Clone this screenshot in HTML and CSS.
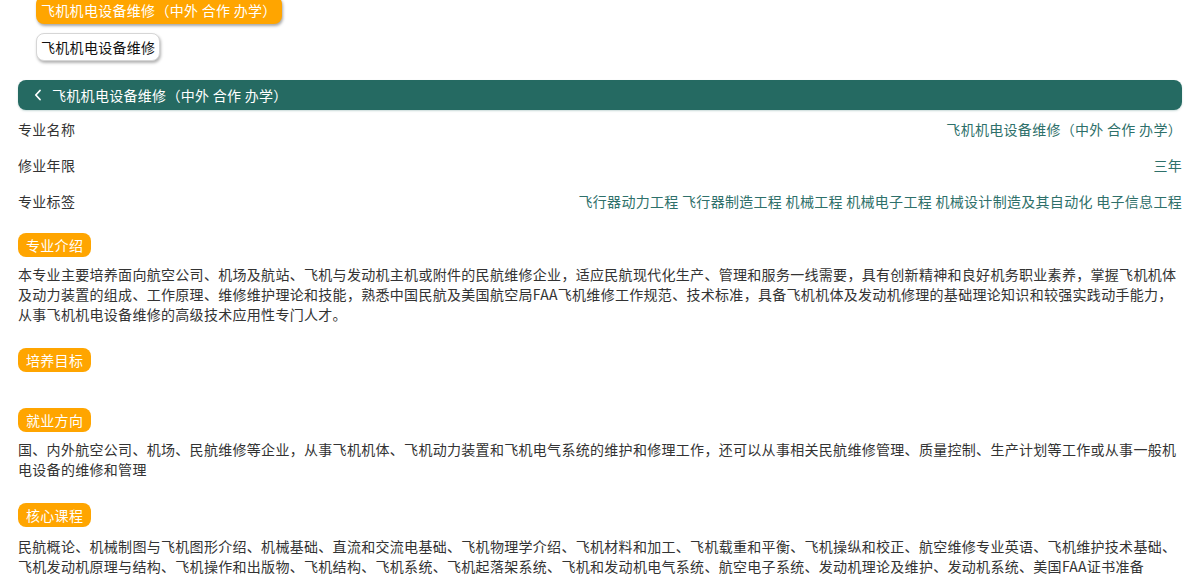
FILE: index.html
```html
<!DOCTYPE html>
<html lang="zh-CN">
<head>
<meta charset="utf-8">
<title>飞机机电设备维修（中外 合作 办学）</title>
<link rel="stylesheet" href="styles.css">
</head>
<body>
<div class="page">
  <div class="btn-group">
    <span class="btn btn-primary">飞机机电设备维修（中外 合作 办学）</span>
    <span class="btn btn-default">飞机机电设备维修</span>
  </div>

  <div class="title-bar">
    <svg class="back" width="8" height="12" viewBox="0 0 8 12"><polyline points="6,1.5 1.8,6 6,10.5" fill="none" stroke="#fff" stroke-width="1.8" stroke-linecap="round" stroke-linejoin="round"/></svg>
    <span class="title-text">飞机机电设备维修（中外 合作 办学）</span>
  </div>

  <div class="info">
    <div class="info-row"><span class="label">专业名称</span><span class="value">飞机机电设备维修（中外 合作 办学）</span></div>
    <div class="info-row"><span class="label">修业年限</span><span class="value">三年</span></div>
    <div class="info-row"><span class="label">专业标签</span><span class="value">飞行器动力工程 飞行器制造工程 机械工程 机械电子工程 机械设计制造及其自动化 电子信息工程</span></div>
  </div>

  <div class="section first">
    <span class="badge">专业介绍</span>
    <p class="content">本专业主要培养面向航空公司、机场及航站、飞机与发动机主机或附件的民航维修企业，适应民航现代化生产、管理和服务一线需要，具有创新精神和良好机务职业素养，掌握飞机机体及动力装置的组成、工作原理、维修维护理论和技能，熟悉中国民航及美国航空局FAA飞机维修工作规范、技术标准，具备飞机机体及发动机修理的基础理论知识和较强实践动手能力，从事飞机机电设备维修的高级技术应用性专门人才。</p>
  </div>

  <div class="section">
    <span class="badge">培养目标</span>
    <p class="content empty"></p>
  </div>

  <div class="section">
    <span class="badge">就业方向</span>
    <p class="content">国、内外航空公司、机场、民航维修等企业，从事飞机机体、飞机动力装置和飞机电气系统的维护和修理工作，还可以从事相关民航维修管理、质量控制、生产计划等工作或从事一般机电设备的维修和管理</p>
  </div>

  <div class="section">
    <span class="badge">核心课程</span>
    <p class="content last">民航概论、机械制图与飞机图形介绍、机械基础、直流和交流电基础、飞机物理学介绍、飞机材料和加工、飞机载重和平衡、飞机操纵和校正、航空维修专业英语、飞机维护技术基础、飞机发动机原理与结构、飞机操作和出版物、飞机结构、飞机系统、飞机起落架系统、飞机和发动机电气系统、航空电子系统、发动机理论及维护、发动机系统、美国FAA证书准备</p>
  </div>
</div>
</body>
</html>
```

FILE: styles.css
```css
html, body {
  margin: 0;
  padding: 0;
  background: #fff;
}

body {
  font-family: "Microsoft YaHei", "Noto Sans CJK SC", "Noto Sans", sans-serif;
  font-size: 14px;
  line-height: 20px;
  letter-spacing: 0.3px;
  color: #333;
  overflow: hidden;
}

.page {
  padding: 0 18px;
}

.btn-group {
  display: flex;
  flex-direction: column;
  align-items: flex-start;
  gap: 9px;
  padding-left: 18px;
}

.btn {
  display: inline-block;
  padding: 4px 5px;
  border-radius: 8px;
  line-height: 20px;
  white-space: nowrap;
}

.btn-primary {
  margin-top: -4px;
  background: #ffa500;
  color: #fff;
  box-shadow: 1px 2px 3px rgba(0, 0, 0, 0.35);
}

.btn-default {
  background: #fff;
  color: #111;
  border: 1px solid #d6d6d6;
  padding: 3px 4px;
  box-shadow: 1px 2px 3px rgba(0, 0, 0, 0.3);
}

.title-bar {
  margin-top: 19px;
  height: 30px;
  background: #256a62;
  border-radius: 8px;
  color: #fff;
  display: flex;
  align-items: center;
  padding-left: 16px;
  box-shadow: 0 1px 2px rgba(37, 106, 98, 0.25);
}

.back {
  display: block;
  margin-right: 10px;
}

.info {
  margin-top: 1px;
}

.info-row {
  display: flex;
  justify-content: space-between;
  align-items: center;
  height: 36px;
}

.value {
  color: #2e706a;
}

.section {
  margin-top: 24px;
}

.section.first {
  margin-top: 14px;
}

.badge {
  display: inline-block;
  background: #ffa500;
  color: #fff;
  border-radius: 8px;
  padding: 2px 8px;
  line-height: 20px;
}

.content {
  margin: 7px 0 0;
  color: #333;
}

.content.empty {
  height: 5px;
}

.content.last {
  margin-top: 9px;
}
```
